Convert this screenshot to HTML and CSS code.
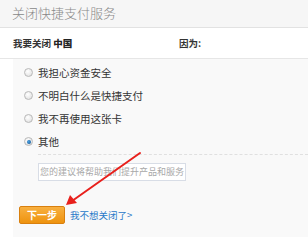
FILE: index.html
```html
<!DOCTYPE html>
<html lang="zh">
<head>
<meta charset="utf-8">
<link rel="stylesheet" href="styles.css">
</head>
<body>
<div class="page">
  <div class="header">关闭快捷支付服务</div>
  <div class="info">
    <span class="who">我要关闭 <b>中国</b></span>
    <span class="why">因为:</span>
  </div>
  <div class="panel">
    <ul class="reasons">
      <li><span class="radio"></span>我担心资金安全</li>
      <li><span class="radio"></span>不明白什么是快捷支付</li>
      <li><span class="radio"></span>我不再使用这张卡</li>
      <li><span class="radio checked"></span>其他</li>
    </ul>
    <div class="dots"></div>
    <div class="suggest">您的建议将帮助我们提升产品和服务</div>
    <div class="actions">
      <span class="btn">下一步</span>
      <a class="link">我不想关闭了&gt;</a>
    </div>
  </div>
  <svg class="arrow" width="308" height="247" viewBox="0 0 308 247">
    <line x1="140" y1="153" x2="72" y2="201" stroke="#e8201c" stroke-width="2" stroke-linecap="round"/>
    <polygon points="66,205 70,195 77,203" fill="#e8201c"/>
  </svg>
</div>
</body>
</html>
```
FILE: styles.css
```css
html, body {
  margin: 0;
  padding: 0;
  background: #ffffff;
}
.page {
  position: relative;
  width: 308px;
  height: 247px;
  overflow: hidden;
  font-family: "Noto Sans CJK SC", "Noto Sans", sans-serif;
}
.header {
  height: 27px;
  line-height: 26px;
  padding-left: 12px;
  background: #f6f6f6;
  border-bottom: 1px solid #e2e2e2;
  color: #888;
  font-size: 13px;
  font-weight: 300;
}
.info {
  display: flex;
  align-items: center;
  height: 30px;
  padding-left: 13px;
  border-bottom: 1px solid #e6e6e6;
  font-size: 9.5px;
  color: #333;
  font-weight: 600;
}
.info b {
  font-weight: 900;
  color: #222;
}
.who {
  width: 166px;
}
.why {
  color: #333;
}
.panel {
  margin-left: 13px;
  height: 178px;
  background: #f9f9f9;
  display: flex;
  flex-direction: column;
}
.reasons {
  list-style: none;
  margin: 0;
  padding: 2px 0 0 11px;
}
.reasons li {
  display: flex;
  align-items: center;
  height: 23px;
  font-size: 10.5px;
  color: #333;
}
.radio {
  width: 9px;
  height: 9px;
  border-radius: 50%;
  border: 1px solid #b9b9b9;
  background: radial-gradient(circle at 40% 35%, #ffffff 0%, #e6e6e6 70%, #d2d2d2 100%);
  margin-right: 5px;
  box-sizing: border-box;
  position: relative;
}
.radio.checked::after {
  content: "";
  position: absolute;
  left: 1.5px;
  top: 1.5px;
  width: 4px;
  height: 4px;
  border-radius: 50%;
  background: radial-gradient(circle at 40% 40%, #4aa0e0, #0b4f8f);
}
.dots {
  margin: 1px 0 0 25px;
  border-top: 1px dashed #e0e0e0;
}
.suggest {
  margin: 8px 0 0 25px;
  width: 148px;
  height: 18px;
  box-sizing: border-box;
  border: 1px solid #d8dde6;
  background: #fff;
  font-size: 9px;
  line-height: 16px;
  padding-left: 1px;
  color: #a8a8a8;
  white-space: nowrap;
  overflow: hidden;
}
.actions {
  display: flex;
  align-items: center;
  margin: 25px 0 0 6px;
}
.btn {
  width: 46px;
  height: 18px;
  box-sizing: border-box;
  border: 1px solid #d9800e;
  border-radius: 2px;
  background: linear-gradient(#f8b040, #ee930f);
  color: #fff;
  font-size: 10px;
  font-weight: 600;
  text-align: center;
  line-height: 16px;
}
.link {
  margin-left: 5px;
  color: #2878c8;
  font-size: 9.5px;
}
.arrow {
  position: absolute;
  left: 0;
  top: 0;
}
```
